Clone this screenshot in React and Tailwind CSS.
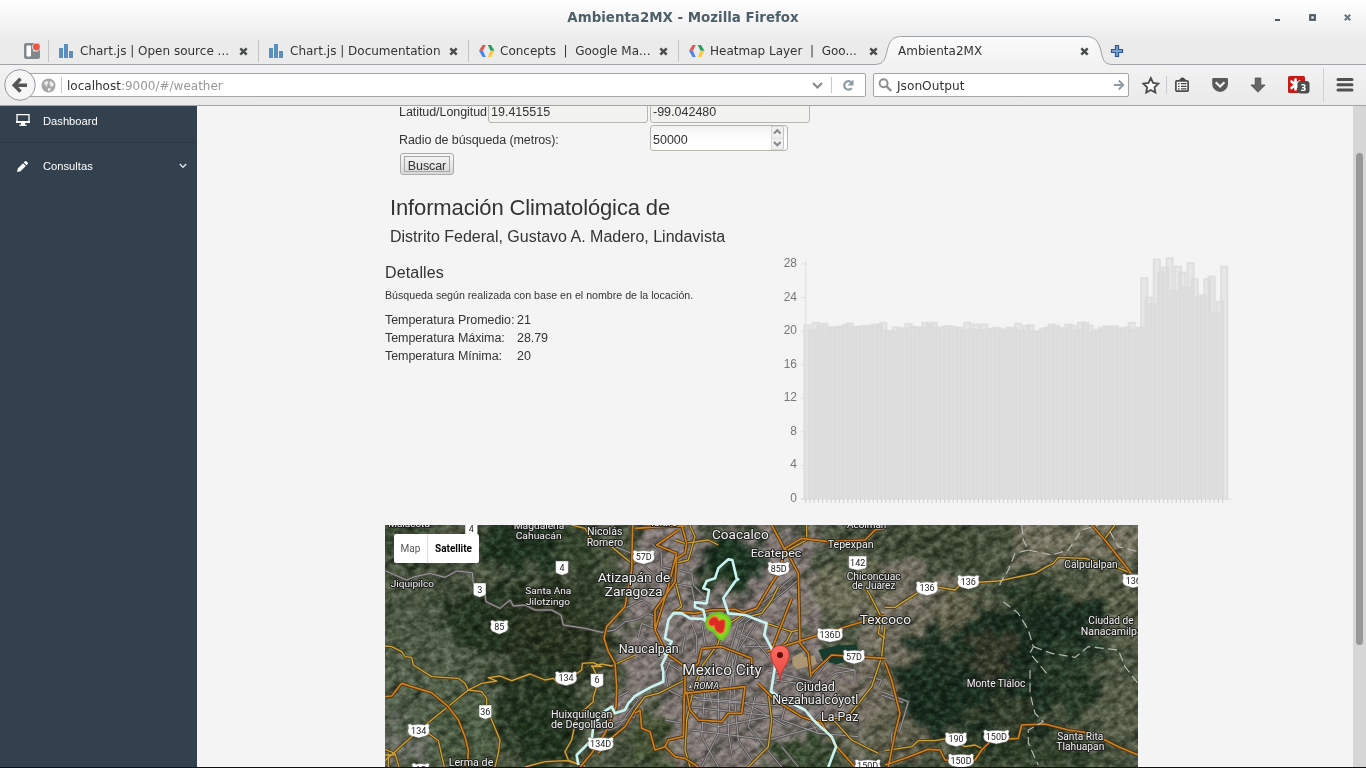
import React from "react";

const CHROME = "font-['DejaVu_Sans',sans-serif]";

const F = "font-['Liberation_Sans',Arial,sans-serif]";

function CloseX({ className = "" }) {
  return (
    <svg className={className} width="9" height="9" viewBox="0 0 9 9">
      <path d="M1.3 1.3 7.7 7.7M7.7 1.3 1.3 7.7" stroke="#4a4e4a" strokeWidth="2.5" />
    </svg>
  );
}

function BarsIcon() {
  return (
    <svg width="14" height="14" viewBox="0 0 14 14" fill="#5b8fc0">
      <rect x="0" y="4" width="4" height="10" />
      <rect x="5" y="0" width="4" height="14" />
      <rect x="10" y="7" width="4" height="7" />
    </svg>
  );
}

function DevIcon() {
  return (
    <svg width="16" height="14" viewBox="0 0 16 14">
      <path d="M3.500 1h3.200L4 6.800H0z" fill="#dc5a4c" />
      <path d="M0 6.800h4L6.700 13H3.500z" fill="#4a86f0" />
      <path d="M8.800 1H12l3.500 5.800h-4z" fill="#1fa262" />
      <path d="M11.500 6.800h4L12 13H8.800z" fill="#fbca3e" />
    </svg>
  );
}

function Tab({ icon, title }) {
  return (
    <div className="flex h-[22px] w-[210px] shrink-0 items-center border-l border-[#c3c3c3] pl-[10px] pr-[10px]">
      <span className="flex w-[21px] shrink-0">{icon}</span>
      <span className="flex-1 whitespace-pre text-[12px] leading-[22px]">{title}</span>
      <CloseX />
    </div>
  );
}

function TitleBar() {
  return (
    <div className="flex h-[35px] items-center pt-px">
      <div className="w-[100px]" />
      <div className="flex-1 text-center text-[13.4px] font-bold text-[#4d5f69]">Ambienta2MX - Mozilla Firefox</div>
      <svg width="100" height="34" viewBox="1266 1 100 34">
        <rect x="1275" y="19" width="5" height="2" fill="#4b5c66" />
        <rect x="1310.200" y="15.200" width="4.600" height="4.600" fill="none" stroke="#4b5c66" strokeWidth="2.200" />
        <path d="m1344.800 14.800 5.400 5.400m0-5.400-5.400 5.400" stroke="#6a7a83" strokeWidth="2.200" />
      </svg>
    </div>
  );
}

function TabStrip() {
  return (
    <div className="relative flex h-[30px] items-center pt-[2px] text-[#333]">
      <div className="flex w-12 shrink-0 justify-end pr-2">
        <svg width="16" height="16" viewBox="0 0 16 16">
          <rect width="16" height="16" rx="2" fill="#82898d" />
          <rect x="2.500" y="2.500" width="4.500" height="11" rx="1" fill="#fff" />
          <path d="M9 2.500h5v6H9z" fill="#e4e4e4" />
          <circle cx="12.400" cy="4" r="4.300" fill="#e9e9e9" />
          <circle cx="12.400" cy="4" r="3.400" fill="#f0563f" />
        </svg>
      </div>
      <Tab icon={<BarsIcon />} title="Chart.js | Open source ..." />
      <Tab icon={<BarsIcon />} title="Chart.js | Documentation" />
      <Tab icon={<DevIcon />} title="Concepts  |  Google Ma..." />
      <Tab icon={<DevIcon />} title="Heatmap Layer  |  Goo..." />
      <svg className="absolute inset-0" width="1366" height="30" viewBox="0 35 1366 30">
        <defs>
          <linearGradient id="tab" x1="0" y1="0" x2="0" y2="1">
            <stop offset="0" stopColor="#fbfbfb" />
            <stop offset="1" stopColor="#f2f2f2" />
          </linearGradient>
        </defs>
        <path d="M872 65c12 0 13-5 16-16 2-8 5-12.500 14-12.500h182c10 0 13 4 15.500 12.500 3 11 3 16 14 16z" fill="url(#tab)" />
        <path d="M0 64.500h874c10 0 11-5 13.500-15.500 2-8 5-12.500 14-12.500h184c9 0 12.500 4 15 12.500 2.500 10 2.500 15.500 12.500 15.500h253" fill="none" stroke="#a0a3a6" />
        <path d="M1115.500 45.500h3v4h4v3h-4v4h-3v-4h-4v-3h4z" fill="#7aa3d4" stroke="#2d5692" strokeWidth="1.200" />
      </svg>
      <div className="relative flex w-[201px] items-center pl-[10px] text-[12px]">
        <span className="flex-1">Ambienta2MX</span>
        <CloseX />
      </div>
    </div>
  );
}

function Toolbar() {
  return (
    <div className="flex h-[41px] items-center border-b border-[#a3a3a3] bg-linear-to-b from-[#f2f2f2] to-[#eaeaea] text-[12px] text-[#333]">
      <div className="relative flex h-10 w-[866px] shrink-0 items-center pl-5">
        <div className="flex h-6 w-[846px] items-center rounded-r-[2px] border border-[#a5a5a5] bg-white pl-5">
          <svg width="15" height="15" viewBox="0 0 15 15">
            <circle cx="7.500" cy="7.500" r="7" fill="#a6a6a6" />
            <path d="M3 4.500 6 3l1.500 1L6 7l.5 2L4 7zM9 3l3.500 2v3L10 9 8.500 6zM7 10l3 .5L9 13H7z" fill="#ececec" />
          </svg>
          <span className="ml-[5px] h-4 w-px bg-[#c8c8c8]" />
          <span className="flex-1 pl-[5px] pt-[2px] text-[12px]">localhost<span className="text-[#999]">:9000/#/weather</span></span>
          <svg width="54" height="20" viewBox="812 75 54 20">
            <path d="m814 83 4.500 4.500L823 83" fill="none" stroke="#858585" strokeWidth="2" />
            <path d="M832.500 77v16" stroke="#c8c8c8" />
            <path d="M852.500 82.300a4.300 4.300 0 1 0 .2 6" fill="none" stroke="#8d9ba5" strokeWidth="2.200" />
            <path d="M854.500 79.500v6h-6z" fill="#8d9ba5" />
          </svg>
        </div>
        <svg className="absolute left-1 top-1" width="32" height="32" viewBox="0 0 32 32">
          <circle cx="16" cy="16" r="15.300" fill="#f6f6f6" stroke="#9298a0" />
          <path d="M23 16.200H11.500M16.500 9.800l-6.300 6.400 6.300 6.400" fill="none" stroke="#555" strokeWidth="3.400" />
        </svg>
      </div>
      <div className="ml-[7px] flex h-6 w-[256px] shrink-0 items-center rounded-[2px] border border-[#a5a5a5] bg-white pl-1">
        <svg width="15" height="15" viewBox="0 0 15 15">
          <circle cx="5.600" cy="5.300" r="4" fill="none" stroke="#8e8e8e" strokeWidth="1.900" />
          <path d="m8.700 8.500 4.600 4.500" stroke="#8e8e8e" strokeWidth="2.400" />
        </svg>
        <span className="ml-1 flex-1 pt-[2px] text-[12.200px]">JsonOutput</span>
        <svg className="mr-[3px]" width="11" height="12" viewBox="0 0 11 12">
          <path d="M0 6h9M4.800 1.500 9.300 6l-4.500 4.500" fill="none" stroke="#8d9ba5" strokeWidth="1.800" />
        </svg>
      </div>
      <svg width="237" height="40" viewBox="1129 65 237 40">
        <path d="m1150.800 78 2.300 4.900 5.200.7-3.800 3.700.9 5.200-4.600-2.500-4.600 2.500.9-5.200-3.800-3.700 5.200-.7z" fill="#fafafa" stroke="#4b4b4b" strokeWidth="1.800" />
        <path d="M1166.500 76v18" stroke="#c8ccd0" />
        <path d="M1180 80.500v-1.500h1.500v-1h2v1h1.500v1.500z" fill="#4b4b4b" stroke="#4b4b4b" />
        <rect x="1175.900" y="80.900" width="12.200" height="10.200" rx=".8" fill="#f7f7f7" stroke="#4b4b4b" strokeWidth="1.700" />
        <path d="M1178 83.700h1.500m1.500 0h5.500m-8.500 2.600h1.500m1.500 0h5.500m-8.500 2.600h1.500m1.500 0h5.500" stroke="#444" strokeWidth="1.200" />
        <path d="M1213.500 78h13.200q1.300 0 1.300 1.300v4.700a7.900 7.900 0 0 1-15.800 0v-4.700q0-1.300 1.300-1.300z" fill="#5a5a5a" />
        <path d="m1215.700 82.300 4.400 4.200 4.400-4.200" stroke="#f4f4f4" fill="none" strokeWidth="2.200" />
        <path d="M1255.200 78h5.600v7h4.300l-7.100 7.200-7.100-7.200h4.300z" fill="#666" stroke="#4b4b4b" strokeWidth=".8" />
        <rect x="1288" y="76" width="17" height="17" rx="1.500" fill="#c81a16" />
        <path d="M1295.500 79.500v10m-4-8 8 6.500m-8 0 8-6.500" stroke="#fff" strokeWidth="2.600" strokeLinecap="round" />
        <rect x="1297.500" y="81" width="12" height="12.500" rx="3" fill="#4c4f50" />
        <text x="1300.400" y="90.600" fontFamily="DejaVu Sans" fontWeight="700" fontSize="8.500" fill="#fff">3</text>
        <path d="M1323.500 68v34" stroke="#d0d0d0" />
        <path d="M1338 79.500h14m-14 5.300h14m-14 5.200h14" stroke="#505050" strokeWidth="3" strokeLinecap="round" />
      </svg>
    </div>
  );
}

function Sidebar() {
  return (
    <div className="w-[197px] shrink-0 bg-[#33414e] text-[11px] text-white">
      <div className="flex h-[37px] items-center border-b border-[#2c3844] pb-[6px] pl-4">
        <svg className="-mt-[3px]" width="14" height="12" viewBox="0 0 14 12">
          <path d="M1 .7h12v7.600H1z" fill="none" stroke="#fff" strokeWidth="1.300" />
          <path d="M0 7h14v2H9v1.500h1.500V12h-7v-1.500H5V9H0z" fill="#fff" />
        </svg>
        <span className="ml-[13px] text-[11.200px]">Dashboard</span>
      </div>
      <div className="flex h-[46px] items-center pl-[17px] pr-[10px]">
        <svg width="11" height="11" viewBox="0 0 11 11" fill="#fff">
          <path d="M0 11 .8 7.500 6 2.300l2.800 2.800-5.300 5.200zM6.800 1.500 8 .3q.7-.6 1.400 0l1.300 1.400q.6.700 0 1.300L9.500 4.300z" />
        </svg>
        <span className="ml-[15px] flex-1 text-[11.200px]">Consultas</span>
        <svg width="8" height="6" viewBox="0 0 8 6"><path d="m.8 1 3.200 3.300L7.200 1" stroke="#e6e6e6" strokeWidth="1.300" fill="none" /></svg>
      </div>
    </div>
  );
}

const tops = [
  238, 252, 231, 240, 234, 245, 245, 244, 243, 238, 233, 244, 243, 241, 240, 243, 236, 238, 231, 255,
  257, 244, 247, 247, 234, 243, 245, 246, 231, 238, 231, 246, 245, 241, 241, 245, 246, 255, 231, 250,
  236, 252, 236, 250, 249, 246, 250, 255, 246, 248, 234, 255, 240, 238, 257, 257, 248, 246, 236, 240,
  247, 247, 236, 240, 253, 231, 231, 240, 259, 252, 246, 241, 244, 241, 247, 252, 244, 231, 253, 246,
  97, 155, 175, 41, 80, 65, 37, 135, 62, 80, 125, 52, 100, 155, 148, 100, 92, 200, 168, 62,
];
const STEP = 4.21;

function Chart() {
  return (
    <svg width="470" height="265" viewBox="770 245 470 265">
      <path d="M805.800 261v238M801 499.200h430.500" stroke="#e2e2e2" strokeWidth="1.300" fill="none" />
      {[28, 24, 20, 16, 12, 8, 4, 0].map((v) => {
        const y = 499 - v * 8.393;
        return (
          <g key={v}>
            <path d={`M801 ${y}h5`} stroke="#dedede" />
            <text x="797" y={y + 3} textAnchor="end" fontFamily="Liberation Sans" fontSize="12" fill="#777">{v}</text>
          </g>
        );
      })}
      {tops.map((t, i) => {
        const x = 804.300 + i * STEP;
        const y = 245.800 + t / 3;
        return (
          <g key={i}>
            <path d={`M${805.800 + i * STEP} 499v4`} stroke="#cfcfcf" />
            <path d={`M${x} 499V${y}h6.300v${499 - y}`} fill="rgba(217,217,217,.5)" stroke="rgba(218,218,218,.75)" strokeWidth="1.900" />
          </g>
        );
      })}
    </svg>
  );
}

const yellow = [
  "M0 378 20 380 50 395 60 410 80 412 85 435 140 470 220 475 240 490 250 510 290 515 305 535 305 560 320 600 345 660 340 700 330 741",
  "M0 722 100 632 250 510 290 490 335 483 310 473 345 468 380 482 435 462 480 480 505 475 520 490 570 465 590 450 592 430 625 428 650 440 620 440 650 432 680 438 750 405",
  "M620 435 632 460 635 500 625 530 625 545 575 590 560 660 540 695 550 720 580 732",
  "M130 640 160 662 178 741", "M0 688 30 700 42 741M0 705 30 705M10 700V741", "M420 741 480 725 545 722 600 738",
  "M560 15 600 25 620 60 680 80 740 130 750 125",
  "M914 15 930 50 910 120 870 130 870 180 890 260 860 280",
  "M1145 310 1220 335 1240 330M1220 335 1205 365 1180 385",
  "M1095 270 1010 325 1000 370 950 440 925 510 905 600 900 690 915 741",
  "M1150 520 1160 600 1150 680 1090 741", "M1500 355 1480 340 1488 290 1455 225 1440 200",
  "M1500 320 1490 410 1460 500 1390 590 1290 605M1290 605 1350 605 1400 660 1480 700",
  "M1180 200 1160 240 1130 280 1090 290", "M1265 15 1265 60 1200 95",
  "M900 480 820 520 780 530 750 570M870 60 900 70 970 60 1000 75",
  "M1500 262 1530 262 1595 220 1650 200 1710 210 1730 190 1840 183 1950 160 1985 140 2005 130 2020 112 2100 115 2190 140 2240 160",
  "M2190 15 2175 35 2160 55", "M1500 692 1580 680 1600 662 1650 662 1690 655 1740 680 1770 675 1800 690",
];
const orange = [
  "M0 530 20 528 50 490 90 503 140 518 190 560 220 600 240 650 250 690 247 741",
  "M743 15 740 150 725 230 720 260 665 320 657 355 670 395 690 430 695 500 693 560 660 640 620 700 585 741",
  "M810 330 850 200 875 100 815 75 880 30M890 15 905 70 900 100 875 115 870 185 810 270 810 330 825 360 845 400 900 440 900 520 1080 500 1070 580 1030 580 1010 605 940 600 915 570 905 515",
  "M750 580 765 570 770 625 795 635 810 690 840 680 850 660 895 650 898 520M840 680 870 710 900 715 940 741",
  "M870 275 930 280 980 270 1050 268 1075 278 1115 265 1160 190 1180 160 1200 90 1160 15",
  "M1200 85 1240 160 1245 370 1270 400 1278 470M1200 85 1250 55 1330 65 1440 60 1470 30 1500 25",
  "M1220 235 1160 390M1280 460 1340 405 1500 415M1145 395 1300 345 1500 285",
  "M950 385 1010 380 1100 415 1100 450M1120 490 1170 540 1250 590 1310 610 1355 680 1410 741",
  "M950 385 940 430 900 460", "M750 570 720 620 660 670 640 700", "M750 25 830 20 900 18",
  "M2120 15 2160 60 2235 155", "M1500 425 1520 480 1545 580 1530 640 1510 741",
  "M1500 735 1560 715 1630 688 1665 690 1680 720 1770 720 1790 690 1820 660 1900 655 1910 615 1980 612 2050 630 2120 640 2200 680 2259 705",
];
const streets = [
  "M0 152 65 180 90 170 135 160 180 172 215 153 262 158 265 190 300 225 303 245 345 265 375 240 385 258 420 255 450 270 500 270 528 285 535 315 600 325 650 337 690 330 720 305 750 300",
  "M700 530 730 515 760 540 700 620 640 640M690 610 750 590M690 80 740 100M720 265 770 240 800 260",
  "M880 150 920 160 925 195 970 240 930 245M770 130 830 185 920 200 930 250M790 60 830 100 830 140 870 150",
  "M1240 180 1080 310 1040 440 1030 640 1040 700M1225 170 1060 310 1020 440M1180 200 1060 390 1035 500",
  "M910 530 1200 560 1190 600 1300 640M910 560 1180 590M920 630 1150 660 1300 620M900 500 940 540 1080 550 1210 620",
  "M1000 500 1000 640 950 741M1050 550 1060 660 1100 720M960 500 950 650 1000 741M1110 530 1090 620 1190 741M1190 680 1240 741",
  "M1150 450 1280 485 1330 420M1160 460 1170 480 1300 500 1350 460 1410 450 1410 480M1350 440 1410 450",
  "M920 310 935 350 935 400M950 310 960 370M870 320 900 350 890 400M1060 340 1110 360 1150 410M1080 380 1150 380",
  "M850 420 900 430 980 460 1080 450M970 400 960 480 980 550M1040 400 1050 530",
  "M1270 480 1330 540 1390 530M1320 560 1280 610 1300 640 1420 650M1450 470 1490 480 1480 500",
  "M870 390 840 460 850 510 910 540M800 410 850 430 880 450M840 600 890 610M800 370 760 350 770 310 820 330",
  "M1490 515 1570 545 1545 630 1520 640 1520 700M1490 525 1555 548M750 300 790 280 830 300M930 600 1000 620 1100 600 1150 590",
];
const river =
  "M580 735 575 705 620 660 625 620 650 580 680 560 690 580 720 570 730 550 750 528 800 500 835 485 835 455 830 435 845 405 838 400 860 365 840 355 850 300 865 280 890 280 915 295 955 297 963 305 955 270 930 262 930 247 965 250 972 210 955 205 965 183 990 175 1000 145 1030 118 1042 120 1055 175 1060 178 1052 182 1015 235 1030 280 1080 285 1145 310 1138 345 1160 385 1170 440 1158 515 1190 535 1260 570 1285 600 1340 650 1353 680 1330 741";
const borders = [
  "M1910 15 1915 60 1930 90 1890 100 1870 150 1845 190 1845 210M1855 245 1900 280 1930 330 1945 380 1935 400 1985 460",
  "M1930 90 2000 105 2050 90 2090 30 2140 15M2175 35 2200 80 2259 95",
  "M1945 380 2000 400 2070 412 2110 380 2200 390 2220 440 2259 490",
  "M1935 450 1935 520 1950 580 1975 605 1930 630 1930 670 1960 735",
];
// Each label gives its centre, baseline and drawn width.
const labels = [
  [72, 22, 125, 28, "Malacota"], [462, 27, 152, 29, "Magdalena"], [461, 57, 138, 29, "Cahuacán"], [659, 44, 106, 30, "Nicolás"], [660, 77, 110, 30, "Romero"],
  [82, 200, 130, 29, "Jiquipilco"], [490, 222, 138, 29, "Santa Ana"], [489, 254, 132, 29, "Jilotzingo"],
  [747, 187, 218, 40, "Atizapán de"], [746, 228, 174, 40, "Zaragoza"], [791, 400, 180, 37, "Naucalpan"],
  [590, 593, 184, 32, "Huixquilucan"], [592, 625, 188, 32, "de Degollado"], [258, 739, 134, 32, "Lerma de"],
  [1066, 56, 170, 40, "Coacalco"], [1173, 111, 152, 35, "Ecatepec"], [1397, 83, 138, 31, "Tepexpan"], [1445, 23, 118, 29, "Acolman"],
  [1466, 179, 162, 30, "Chiconcuac"], [1466, 208, 130, 30, "de Juárez"], [1501, 312, 154, 39, "Texcoco"],
  [1291, 512, 118, 38, "Ciudad"], [1291, 551, 258, 38, "Nezahualcóyotl"], [1364, 604, 112, 37, "La Paz"],
  [2118, 143, 160, 30, "Calpulalpan"], [2178, 313, 136, 30, "Ciudad de"], [2180, 345, 186, 30, "Nanacamilpa"],
  [1833, 502, 176, 30, "Monte Tláloc"], [2086, 659, 138, 30, "Santa Rita"], [2086, 689, 144, 30, "Tlahuapan"], [838, 19, 80, 26, "Isidro"],
];
const shields = [
  [259, 28, "4", 0], [531, 143, "4", 0], [284, 209, "3", 0], [343, 321, "85", 1], [301, 575, "36", 0],
  [636, 481, "6", 0], [543, 475, "134", 1], [101, 632, "134", 1], [647, 672, "134D", 1], [107, 750, "15", 1],
  [776, 111, "57D", 1], [1181, 146, "85D", 1], [1418, 128, "142", 0], [1335, 345, "136D", 1], [1407, 410, "57D", 1],
  [1626, 205, "136", 1], [1750, 186, "136", 1], [2245, 182, "136", 1], [1713, 658, "190", 1], [1834, 650, "150D", 1],
  [1728, 722, "150D", 1], [1448, 739, "150D", 1],
];
// [cx, cy, rx, ry, colour]
const forests = [
  [400, 70, 130, 90, "#1f3320"], [330, 300, 150, 110, "#263722"], [520, 330, 150, 170, "#2a3420"], [450, 540, 130, 130, "#273723"],
  [490, 650, 110, 90, "#22351f"], [620, 230, 60, 110, "#33402a"], [30, 80, 90, 70, "#3c4c34"], [800, 640, 60, 100, "#485536"],
  [1040, 130, 95, 75, "#1b3320"], [990, 170, 45, 50, "#1f371e"], [1270, 690, 130, 40, "#3a4d32"], [1420, 660, 70, 60, "#6b6c59"],
  [1800, 500, 270, 170, "#1a2d1f"], [1960, 330, 210, 100, "#1b2e20"], [1680, 400, 100, 80, "#223424"], [1940, 200, 60, 60, "#2c3b27"],
  [1700, 60, 180, 60, "#424c36"], [2050, 480, 80, 110, "#273a27"], [1960, 700, 230, 40, "#304029"], [1830, 410, 85, 65, "#363a2a"],
  [1860, 580, 90, 60, "#343f2b"], [590, 80, 60, 70, "#35462d"],
];
const plains = [
  [100, 560, 250, 190, "#54624c"], [230, 640, 130, 90, "#4c5d43"], [120, 320, 160, 80, "#505c47"], [60, 680, 90, 60, "#6c7065"],
  [1560, 280, 170, 150, "#777263"], [1620, 380, 110, 80, "#706c5b"], [1380, 210, 120, 90, "#6d6e56"], [2060, 60, 260, 80, "#767360"],
  [2150, 280, 150, 110, "#5e634b"], [2160, 560, 160, 110, "#565d47"], [1560, 580, 120, 150, "#646350"], [1400, 520, 110, 110, "#746e60"],
  [1750, 280, 120, 60, "#64634d"], [620, 40, 60, 35, "#6a6f5c"],
];
const urban = [
  [1080, 520, 270, 240], [950, 370, 180, 160], [830, 260, 110, 160], [850, 90, 110, 80], [1180, 250, 120, 150], [1160, 80, 150, 60],
  [1260, 560, 140, 90], [780, 430, 70, 90], [1000, 690, 200, 60], [740, 580, 50, 50],
];

function Roads({ list, color, width, casing }) {
  return (
    <g fill="none" strokeLinejoin="round">
      {list.map((d) => <path key={d} d={d} stroke={casing} strokeWidth={width + 5} />)}
      {list.map((d) => <path key={d + "t"} d={d} stroke={color} strokeWidth={width} />)}
    </g>
  );
}

function Blobs({ list, color }) {
  return list.map(([x, y, rx, ry, c]) => <ellipse key={`${x}-${y}`} cx={x} cy={y} rx={rx} ry={ry} fill={c || color} />);
}

function SatelliteMap() {
  return (
    <div className="relative h-[242px] w-[753px] overflow-hidden bg-[#3d4a33]">
      <svg className="block" width="753" height="242" viewBox="0 15 2259 726">
        <defs>
          <filter id="rough" x="-5%" y="-5%" width="110%" height="110%" colorInterpolationFilters="sRGB">
            <feTurbulence type="fractalNoise" baseFrequency=".018" numOctaves="5" seed="4" result="n" />
            <feDisplacementMap in="SourceGraphic" in2="n" scale="190" xChannelSelector="R" yChannelSelector="G" />
            <feGaussianBlur stdDeviation="8" />
          </filter>
          <filter id="grain" x="0" y="0" width="100%" height="100%" colorInterpolationFilters="sRGB">
            <feTurbulence type="fractalNoise" baseFrequency=".045 .06" numOctaves="4" seed="9" />
            <feColorMatrix values="1.700 0 0 0 -.33  1.700 0 0 0 -.33  1.700 0 0 0 -.33  0 0 0 0 1" />
          </filter>
          <filter id="ridge" x="0" y="0" width="100%" height="100%" colorInterpolationFilters="sRGB">
            <feTurbulence type="fractalNoise" baseFrequency=".009 .045" numOctaves="4" seed="21" />
            <feColorMatrix values="0 0 0 0 .07  0 0 0 0 .11  0 0 0 0 .07  0 4 0 0 -1.950" />
          </filter>
          <filter id="blur"><feGaussianBlur stdDeviation="2" /></filter>
          <linearGradient id="pin" x1="0" y1="0" x2="0" y2="1"><stop stopColor="#fb6d64" /><stop offset="1" stopColor="#e8443c" /></linearGradient>
        </defs>
        <rect y="15" width="2259" height="726" fill="#4b5540" />
        <g filter="url(#rough)">
          <Blobs list={plains} />
          <Blobs list={urban} color="#857b78" />
          <Blobs list={forests} />
        </g>
        <g transform="rotate(-38 1100 380)" opacity=".38"><rect x="0" y="-700" width="2300" height="2200" filter="url(#ridge)" /></g>
        <rect y="15" width="2259" height="726" filter="url(#grain)" className="mix-blend-soft-light" opacity=".5" />
        <path d="m1300 390 50-12 65-5 5 40-65 20-40-10z" fill="#173b2c" />
        <path d="m1222 412 30-15 8 15 28-5 8 25-60 16-14-15z" fill="#ac9773" />
        <Roads list={streets} color="#a2a1a7" width={2.800} casing="#55514e" />
        <Roads list={yellow} color="#cda33c" width={4} casing="#4b3b18" />
        <Roads list={orange} color="#cb8220" width={5} casing="#4e3010" />
        <g fill="none" stroke="#b6bbb4" strokeWidth="3.500" strokeDasharray="27 13">{borders.map((d) => <path key={d} d={d} />)}</g>
        <path d={river} fill="none" stroke="#c8f2f0" strokeWidth="8" strokeLinejoin="round" />
        <g filter="url(#blur)">
          <path d="M963 308q8-30 42-28 30 5 31 30-4 30-24 48-12 0-25-25-24-5-24-25z" fill="#87d823" stroke="#6fc723" strokeWidth="7" />
          <path d="M970 305q8-20 25-14l8 10q20-8 18 8 0 32-16 32-15-5-18-23-17 3-17-13z" fill="#dd2b25" stroke="#e5872a" strokeWidth="4" />
        </g>
        <g fontFamily="Roboto, sans-serif" textAnchor="middle">
          {shields.map(([x, y, t, federal]) => {
            const w = federal ? 30 + t.length * 12 : t.length > 2 ? 54 : 38;
            return (
              <g key={`${x}-${y}`} transform={`translate(${x} ${y})`}>
                {federal ? (
                  <path d={`M${-w / 2} -18l7 -3 7 4q${w / 2 - 14} -5 ${w - 28} 0l7 -4 7 3q-5 10 0 18 0 12 -12 16l${-(w / 2 - 12)} 6 ${-(w / 2 - 12)} -6q-12 -4 -12 -16 5 -8 0 -18z`} fill="#fff" stroke="#555" strokeWidth="1.500" />
                ) : (
                  <path d={`M${-w / 2} -20h${w}v32q0 5 -6 6l${-(w / 2 - 6)} 5 ${-(w / 2 - 6)} -5q-6 -1 -6 -6z`} fill="#fff" stroke="#555" strokeWidth="1.500" />
                )}
                <text y="9" fontSize="27" fill="#222">{t}</text>
              </g>
            );
          })}
          <g fill="#f1f1f1" stroke="#1f211e" strokeWidth="6" strokeLinejoin="round" className="[paint-order:stroke]">
            {labels.map(([x, y, w, s, t]) => <text key={t} x={x} y={y} fontSize={s} textLength={w} lengthAdjust="spacingAndGlyphs">{t}</text>)}
            <text x="1011" y="465" fontSize="45" textLength="238" lengthAdjust="spacingAndGlyphs">Mexico City</text>
            <text x="964" y="507" fontSize="27" fontStyle="italic" textLength="76" lengthAdjust="spacingAndGlyphs">ROMA</text>
          </g>
        </g>
        <path d="m910 505 6-14 6 14z" fill="#ddd" stroke="#222" strokeWidth="2" />
        <path d="M1185 482c-2-38-28-49-28-78a28 28 0 0 1 56 0c0 29-26 40-28 78z" fill="url(#pin)" stroke="#b5342d" strokeWidth="3" />
        <circle cx="1185" cy="405" r="9" fill="#5f100c" />
      </svg>
      <div className="absolute left-[9px] top-[9px] flex h-[29px] w-[85px] items-center rounded-[2px] bg-white font-[Roboto,sans-serif] text-[10px] text-[#565656] shadow">
        <span className="flex h-full w-[34px] items-center justify-center border-r border-[#ddd]">Map</span>
        <span className="flex-1 text-center text-[10px] font-bold text-black">Satellite</span>
      </div>
    </div>
  );
}

function Field({ value, className = "" }) {
  return (
    <input readOnly value={value} className={`h-[27px] rounded-[3px] border border-[#b7b7b2] px-[2px] ${className}`} />
  );
}

function WeatherPage() {
  return (
    <div className="flex min-w-0 flex-1 flex-col overflow-hidden bg-[#f4f4f4] pl-[188px] text-[12.5px] text-[#333]">
      <div className="-mt-[10px] flex flex-col pl-[14px]">
        <div className="flex h-[27px] items-center gap-[2px]">
          <span className="w-[87px] shrink-0 whitespace-nowrap pt-[6px] tracking-[-0.06px]">Latitud/Longitud</span>
          <Field value="19.415515" className="w-[160px] bg-[#f2f2f1] pt-[4px]" />
          <Field value="-99.042480" className="w-[160px] bg-[#f2f2f1] pt-[4px]" />
        </div>
        <div className="mt-px flex h-[28px] items-center">
          <span className="w-[251px] shrink-0 pt-[4px] tracking-[-0.08px]">Radio de búsqueda (metros):</span>
          <div className="flex h-[26px] w-[138px] rounded-[3px] border border-[#b7b7b2] bg-linear-to-b from-[#f2f2f2] to-white to-60%">
            <input readOnly value="50000" className="w-[120px] bg-transparent px-[2px] pt-[4px]" />
            <svg width="13" height="24" viewBox="0 0 13 24">
              <rect x="0" y="0" width="12.500" height="24" rx="2" fill="#f0f0f0" stroke="#c4c4c4" />
              <path d="M0 12h12" stroke="#dcdcdc" />
              <path d="m3 7.500 3.300-3.300 3.300 3.300M3 16l3.300 3.300L9.600 16" fill="none" stroke="#888" strokeWidth="2" />
            </svg>
          </div>
        </div>
        <button className="ml-px mt-[1px] flex h-[22px] w-[54px] items-center justify-center rounded-[3px] border border-[#aaa] bg-linear-to-b from-[#f7f7f7] to-[#d9d9d9] p-[2px]">
          <span className="flex h-4 w-[46px] items-center justify-center border border-[#a6a6a6] pt-[4px] leading-none tracking-[-0.08px]">Buscar</span>
        </button>
      </div>
      <div className="mt-[19px] pl-[5px]">
        <h1 className="text-[22px] leading-[27px] tracking-[-0.13px]">Información Climatológica de</h1>
        <h2 className="mt-[2px] text-[16px] leading-[27px]">Distrito Federal, Gustavo A. Madero, Lindavista</h2>
      </div>
      <div className="-mt-[5px] flex h-[265px]">
        <div className="w-[385px] shrink-0 pt-[18px]">
          <h3 className="text-[16px] leading-5 tracking-[0.15px]">Detalles</h3>
          <p className="mt-[4px] text-[10.65px] leading-4">Búsqueda según realizada con base en el nombre de la locación.</p>
          <dl className="mt-[8px] grid grid-cols-[132px_1fr] leading-[18px] tracking-[-0.06px]">
            <dt>Temperatura Promedio:</dt><dd>21</dd>
            <dt>Temperatura Máxima:</dt><dd>28.79</dd>
            <dt>Temperatura Mínima:</dt><dd>20</dd>
          </dl>
        </div>
        <Chart />
      </div>
      <div className="mt-[15px]"><SatelliteMap /></div>
    </div>
  );
}

export default function App() {
  return (
    <div className={`flex h-[768px] w-[1366px] flex-col overflow-hidden bg-[#ebebeb] ${F}`}>
      <div className={`shrink-0 bg-linear-to-b from-white to-[#ebebeb] to-40% ${CHROME}`}>
        <TitleBar />
        <TabStrip />
        <Toolbar />
      </div>
      <div className="flex h-[662px] border-b border-[#101010]">
        <Sidebar />
        <WeatherPage />
        <div className="flex w-[13px] shrink-0 justify-center bg-[#d6d6d6] pt-[47px]">
          <div className="h-[492px] w-[7px] rounded-full bg-[#96989a]" />
        </div>
      </div>
    </div>
  );
}
